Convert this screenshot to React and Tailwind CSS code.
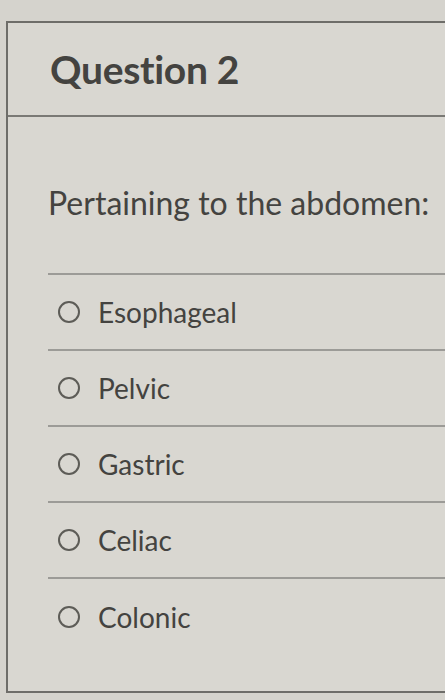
import React from 'react';

const options = ['Esophageal', 'Pelvic', 'Gastric', 'Celiac', 'Colonic'];

function Radio() {
    return <span className="block w-[22px] h-[22px] rounded-full border-2 border-[#5d5c57] shrink-0" />;
}

export default function App() {
    return (
        <div className="w-[445px] h-[700px] overflow-hidden bg-[#d5d3cd] pt-[21px] pl-[6px] font-['Lato',sans-serif] text-[#444340]">
            <div className="w-[460px] h-[672px] border-t-2 border-l-2 border-b-2 border-[#6e6d69] bg-[#d9d7d1]">
                {/* header */}
                <div className="h-[94px] border-b-2 border-[#7a7975] flex items-center pl-[42px]">
                    <h2 className="text-[39px] font-bold tracking-[-0.3px]">Question 2</h2>
                </div>

                {/* body */}
                <div className="pl-[40px]">
                    <p className="pt-[66px] pb-[50px] text-[32px] leading-[40px]">Pertaining to the abdomen:</p>
                    <ul className="border-t-2 border-[#9c9b97]">
                        {options.map((o, i) => (
                            <li
                                key={o}
                                className={`h-[76px] flex items-center gap-[18px] pl-[10px] ${i < options.length - 1 ? 'border-b-2 border-[#9c9b97]' : ''}`}
                            >
                                <Radio />
                                <span className="text-[28px]">{o}</span>
                            </li>
                        ))}
                    </ul>
                </div>
            </div>
        </div>
    );
}
